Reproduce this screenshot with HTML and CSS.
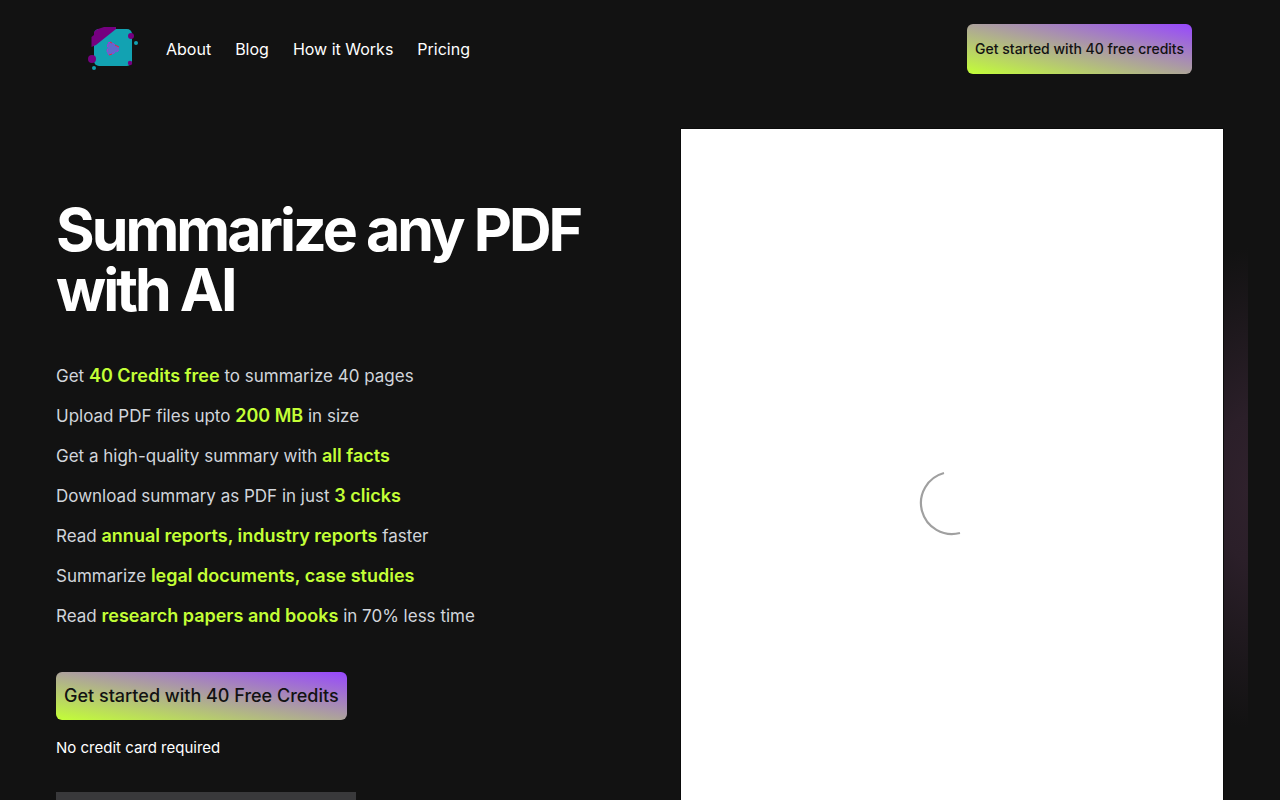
FILE: index.html
```
<!DOCTYPE html>
<html lang="en">
<head>
    <meta charset="UTF-8">
    <meta name="viewport" content="width=device-width, initial-scale=1">
    <title>Summarize any PDF with AI</title>
    <link rel="stylesheet" href="styles.css">
</head>
<body>

<header class="header">
    <nav class="nav">
        <a href="#" class="logo" aria-label="Home">
            <svg width="54" height="50" viewBox="0 0 54 50">
                <rect x="6" y="5" width="38" height="37" rx="5" fill="#12a2b2"/>
                <path d="M3.500 23V13L6 11V8L8 6L10 5L16 3H28V5L8 21Z" fill="#750080"/>
                <circle cx="43" cy="12" r="3" fill="#750080"/>
                <circle cx="4" cy="35" r="4" fill="#750080"/>
                <circle cx="42" cy="39" r="2.200" fill="#750080"/>
                <circle cx="48" cy="19" r="2" fill="#12a2b2"/>
                <circle cx="6" cy="44" r="2" fill="#12a2b2"/>
                <path d="M20 19L23 18L31 24L30 27L22 31L19 29Z" fill="#5f6bcb" stroke="#b72bdc" stroke-width="1" stroke-dasharray="3 2"/>
                <path d="M27 21L31 23M21 31L24 30M22 18L24 19" stroke="#e8263f" stroke-width="1"/>
            </svg>
        </a>
        <a href="#about">About</a>
        <a href="#blog">Blog</a>
        <a href="#how-it-works">How it Works</a>
        <a href="#pricing">Pricing</a>
    </nav>
    <button class="btn btn-header">Get started with 40 free credits</button>
</header>

<main class="hero">
    <section class="hero-text">
        <h1>Summarize any PDF with AI</h1>
        <ul class="features">
            <li>Get <strong>40 Credits free</strong> to summarize 40 pages</li>
            <li>Upload PDF files upto <strong>200 MB</strong> in size</li>
            <li>Get a high-quality summary with <strong>all facts</strong></li>
            <li>Download summary as PDF in just <strong>3 clicks</strong></li>
            <li>Read <strong>annual reports, industry reports</strong> faster</li>
            <li>Summarize <strong>legal documents, case studies</strong></li>
            <li>Read <strong>research papers and books</strong> in 70% less time</li>
        </ul>
        <button class="btn btn-hero">Get started with 40 Free Credits</button>
        <p class="note">No credit card required</p>
        <div class="badge"></div>
    </section>

    <section class="demo">
        <div class="glow"></div>
        <div class="player">
            <svg class="spinner" width="66" height="66" viewBox="0 0 66 66">
                <path d="M25 3A31 31 0 1 0 41 63" fill="none" stroke="#a0a0a0" stroke-width="2.200"/>
            </svg>
        </div>
    </section>
</main>

</body>
</html>
```

FILE: styles.css
```
* {
    box-sizing: border-box;
}

body {
    margin: 0;
    background-color: #121212;
    color: white;
    font-family: Inter, sans-serif;
    font-size: 16px;
    line-height: 24px;
}

h1, p, ul {
    margin: 0;
    padding: 0;
}

.header {
    display: flex;
    justify-content: space-between;
    align-items: center;
    padding: 24px 88px;
}

.nav {
    display: flex;
    align-items: center;
    gap: 24px;
}

.nav a {
    color: white;
    text-decoration: none;
}

.logo svg {
    display: block;
}

.btn {
    display: block;
    border: none;
    border-radius: 6px;
    padding: 0 8px 2px;
    background: linear-gradient(to top right, #c3ff36, #9747ff);
    color: #121212;
    font-family: inherit;
    font-weight: 500;
    cursor: pointer;
}

.btn-header {
    height: 50px;
    font-size: 14px;
}

.btn-hero {
    height: 48px;
    margin-top: 36px;
    font-size: 18px;
}

.hero {
    display: grid;
    grid-template-columns: 1fr 1fr;
    gap: 80px;
    margin: 0 32px;
    padding: 30px 24px;
    overflow: hidden;
}

.hero-text {
    padding-top: 72px;
}

h1 {
    font-size: 59px;
    line-height: 60px;
    font-weight: 700;
    letter-spacing: -0.05em;
}

.features {
    margin-top: 36px;
    list-style: none;
    color: #d1d5db;
    font-size: 17px;
    line-height: 40px;
}

.features li {
    height: 40px;
}

.features strong {
    color: #c3ff36;
    font-size: 18px;
    font-weight: 600;
}

.note {
    margin-top: 16px;
    font-size: 15px;
}

.badge {
    width: 300px;
    height: 54px;
    margin-top: 32px;
    background-color: #39393b;
}

.demo {
    position: relative;
}

.glow {
    position: absolute;
    top: 120px;
    right: -124px;
    width: 200px;
    height: 480px;
    background: radial-gradient(closest-side, #2f212c, #2b1f29 30%, #121212);
}

.player {
    position: relative;
    display: flex;
    justify-content: center;
    align-items: center;
    height: 750px;
    border: 1px solid #0b0b0b;
    background-color: white;
}
```
